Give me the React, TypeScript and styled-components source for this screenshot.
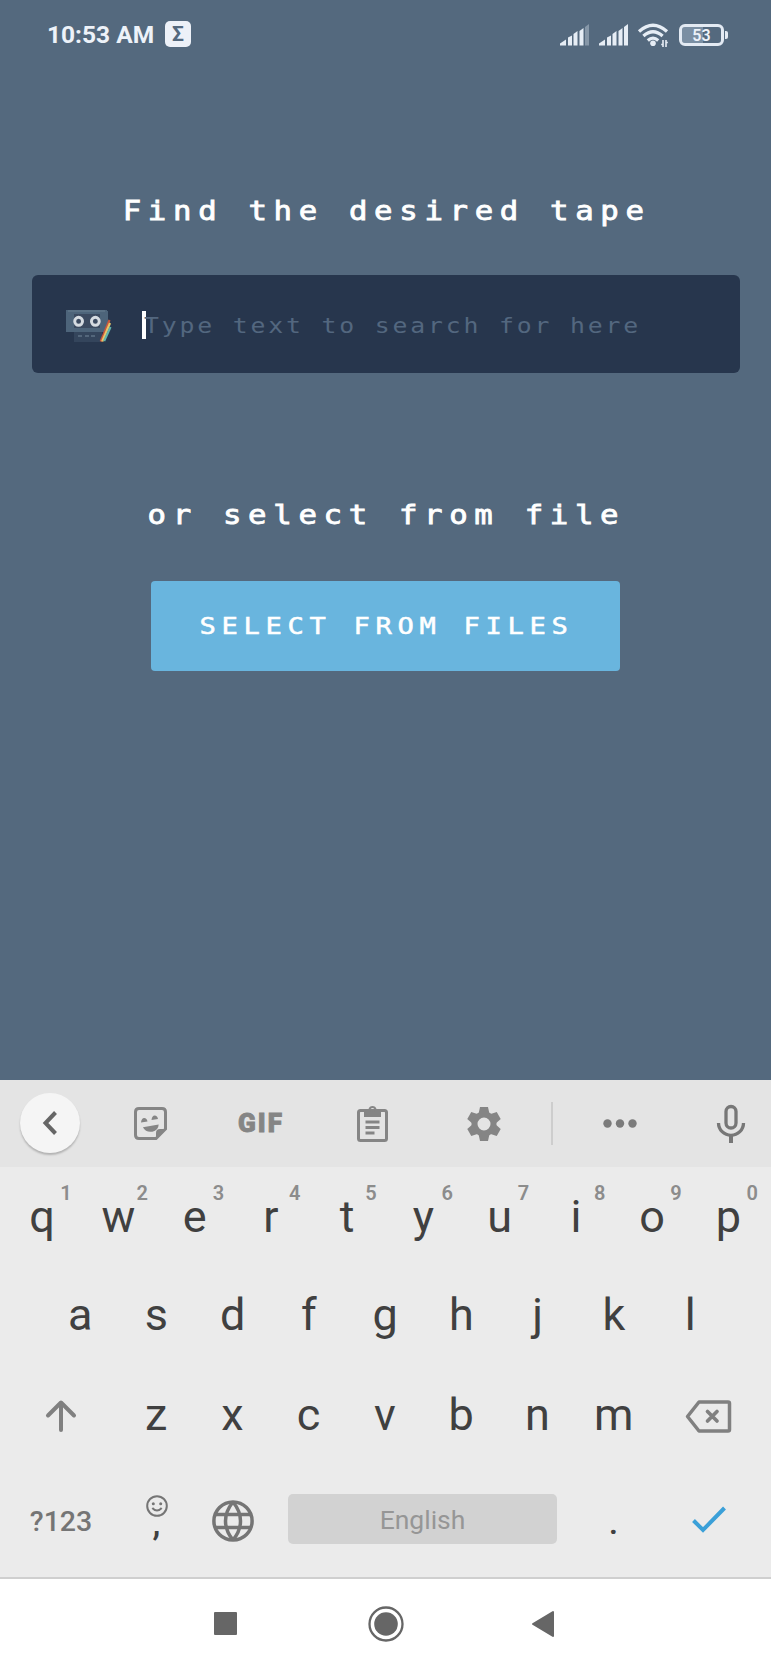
import React from 'react';
import styled, { createGlobalStyle } from 'styled-components';

const GlobalStyle = createGlobalStyle`
  * { box-sizing: border-box; }
  body { margin: 0; background: #54697e; font-family: Roboto, sans-serif; }
  svg { display: block; overflow: visible; }
`;

const Screen = styled.div`
  width: 771px;
  height: 1670px;
  display: flex;
  flex-direction: column;
  background: #54697e;
  overflow: hidden;
`;

const StatusBar = styled.header`
  height: 69px;
  display: flex;
  align-items: center;
  padding: 0 43px 0 47px;
  color: #edf2f9;
`;

const Clock = styled.span`
  font-size: 24.5px;
  font-weight: 700;
  line-height: 28px;
  width: 118px;
  white-space: nowrap;
`;

const SigmaBadge = styled.span`
  width: 26px;
  height: 26px;
  margin-bottom: 1px;
  border-radius: 5px;
  background: #edf1f8;
  color: #54697e;
  font: 700 21px/27px Roboto, sans-serif;
  text-align: center;
`;

const StatusIcons = styled.div`
  margin-left: auto;
  display: flex;
  align-items: center;
  gap: 10px;
`;

const BatteryShell = styled.div`
  display: flex;
  align-items: center;
  gap: 1px;
  margin-left: 1px;
`;

const BatteryBody = styled.div`
  width: 45px;
  height: 22px;
  border: 3px solid #e3eaf3;
  border-radius: 6px;
  background: linear-gradient(90deg, #7b8fa3 53%, #54697e 53%);
  background-clip: padding-box;
  font: 600 16px/17px Roboto, sans-serif;
  text-align: center;
`;

const BatteryNub = styled.div`
  width: 3px;
  height: 8px;
  border-radius: 0 2px 2px 0;
  background: #e3eaf3;
`;

const Main = styled.main`
  height: 1011px;
  display: flex;
  flex-direction: column;
  align-items: center;
`;

const PixelText = styled.span<{ $size: number; $gap: number; $left?: boolean }>`
  display: inline-block;
  font-family: 'DejaVu Sans Mono', monospace;
  font-size: ${p => p.$size}px;
  letter-spacing: ${p => p.$gap}px;
  margin-right: ${p => (p.$left ? 0 : -p.$gap)}px;
  transform: scaleX(1.18);
  transform-origin: ${p => (p.$left ? 'left' : 'center')};
  white-space: pre;
`;

const Heading = styled.h1<{ $top: number }>`
  margin: ${p => p.$top}px 3px 0 0;
  height: 40px;
  line-height: 40px;
  font-weight: 400;
  color: #fff;
  -webkit-text-stroke: 0.8px #fff;
`;

const SearchBox = styled.div`
  width: 708px;
  height: 98px;
  margin-top: 46px;
  padding: 3px 0 0 34px;
  border-radius: 6px;
  background: #27364d;
  display: flex;
  align-items: center;
  color: #53677f;
`;

const Caret = styled.span`
  width: 4px;
  height: 28px;
  margin: 0 -2px 2px 31px;
  background: #fff;
`;

const FileButton = styled.button`
  width: 469px;
  height: 90px;
  margin-top: 48px;
  border: 0;
  border-radius: 4px;
  background: #69b5de;
  color: #fff;
  padding: 0 2px 0 0;
  font-weight: 400;
  -webkit-text-stroke: 0.5px #fff;
`;

const Keyboard = styled.section`
  height: 497px;
  display: flex;
  flex-direction: column;
  background: #ebebeb;
`;

const Toolbar = styled.div`
  height: 87px;
  display: grid;
  grid-template-columns: 99px 102px 119px 104px 119px 17px 120px 91px;
  align-items: center;
  justify-items: center;
  background: #e4e4e4;
  color: #858585;
`;

const BackButton = styled.div`
  width: 60px;
  height: 60px;
  margin-bottom: 1px;
  border-radius: 50%;
  background: #f5f5f5;
  box-shadow: 0 2px 2px rgba(0, 0, 0, 0.22);
  display: grid;
  place-items: center;
`;

const Gif = styled.span`
  font: 900 26px/30px Roboto, sans-serif;
  letter-spacing: 2px;
  margin: 0 -1px 2px 0;
  -webkit-text-stroke: 0.9px currentColor;
`;

const Divider = styled.span`
  width: 2px;
  height: 43px;
  background: #cdcdcd;
`;

const MicSlot = styled.span`
  padding-left: 11px;
`;

const KeyRow = styled.div<{ $height: number; $pad: number }>`
  height: ${p => p.$height}px;
  padding: 0 ${p => p.$pad}px;
  display: flex;
`;

const Key = styled.div<{ $width?: number }>`
  position: relative;
  width: ${p => p.$width ?? 76.25}px;
  flex: none;
  display: flex;
  align-items: center;
  justify-content: center;
  font-size: 45px;
  color: #404040;
`;

const Hint = styled.span`
  position: absolute;
  top: 14px;
  left: 52px;
  width: 20px;
  text-align: center;
  font: 600 20px/24px Roboto, sans-serif;
  color: #8c8c8c;
`;

const BottomRow = styled.div`
  height: 111px;
  padding: 0 4px 4px;
  display: flex;
  align-items: center;
  color: #757575;
`;

const BottomSlot = styled.div<{ $width: number; $drop?: number }>`
  width: ${p => p.$width}px;
  padding-top: ${p => p.$drop ?? 0}px;
  display: flex;
  flex-direction: column;
  align-items: center;
`;

const SymbolsLabel = styled.span`
  font: 500 28.5px/34px Roboto, sans-serif;
`;

const Comma = styled.span`
  height: 28px;
  font: 500 35px/14px Roboto, sans-serif;
  color: #404040;
`;

const Period = styled.span`
  font: 500 34px/30px Roboto, sans-serif;
  color: #404040;
`;

const SpaceBar = styled.div`
  width: 269px;
  height: 50px;
  margin: 0 18px 1px;
  border-radius: 5px;
  background: #d2d2d2;
  color: #969696;
  font: 400 26.5px/51px Roboto, sans-serif;
  text-align: center;
`;

const NavBar = styled.nav`
  height: 93px;
  border-top: 2px solid #cfcfcf;
  background: #fff;
  display: flex;
  align-items: center;
  padding: 0 0 2px 214px;
`;

const NavSlot = styled.span<{ $gap?: number }>`
  margin-left: ${p => p.$gap ?? 0}px;
`;

const Signal = ({ dim = false }: { dim?: boolean }) => (
  <svg width="29" height="22" viewBox="0 0 29 22" fill="#e6edf5">
    <path d="M0 21.500v-2l6-4v6z" />
    <path d="M8 21.500v-8l4-2v10z" />
    <path d="M13.500 21.500V10l4-3v14.500z" />
    <path d="M19.500 21.500V7l4-3v17.500z" />
    <path d="M25 21.500V3l4-3v21.500z" opacity={dim ? 0.35 : 1} />
  </svg>
);

const Wifi = () => (
  <svg width="30" height="24" viewBox="0 0 30 24" fill="none" stroke="#e6edf5" strokeWidth="3.3">
    <path d="M1 8.400Q15-4 29 8.400" />
    <path d="M5.400 13Q15 4.500 24.600 13" />
    <path d="M9.800 17.400Q15 12.800 20.200 17.400" />
    <circle cx="15" cy="20.200" r="2.800" fill="#e6edf5" stroke="none" />
    <path d="M25 17v7M28 17v7M23.200 21.500H25M28 19.500h1.800" strokeWidth="1.600" />
  </svg>
);

const Cassette = () => (
  <svg width="45" height="32" viewBox="0 0 46 32" preserveAspectRatio="none" shapeRendering="crispEdges">
    <path d="M8 21h29v11H8z" fill="#34455c" />
    <path d="M1 0h40l2 2v18l-2 2H0V1z" fill="#4d647a" />
    <path d="M2 0h38v2H2z" fill="#5a7185" />
    <path d="M8 4h27v14H8z" fill="#3b4a60" />
    <g fill="none" stroke="#d5dbe1" strokeWidth="3" shapeRendering="auto">
      <circle cx="12.900" cy="11.300" r="4" />
      <circle cx="30" cy="11.300" r="4" />
    </g>
    <path d="M12 25h4v2h-4zM19 25h4v2h-4zM26 25h4v2h-4z" fill="#53667b" />
    <g fill="none" strokeWidth="2.200" shapeRendering="auto">
      <path d="M44.500 10 35.500 31.500" stroke="#c9573d" />
      <path d="M45 13 37 31.500" stroke="#e9c568" />
      <path d="M45.500 17 39 31" stroke="#63b5ad" />
    </g>
  </svg>
);

const Sticker = () => (
  <svg width="33" height="33" viewBox="0 0 33 33" fill="none" stroke="currentColor" strokeWidth="3">
    <path d="M5 1.500h23q3.500 0 3.500 3.500v17l-9.500 9.500H5Q1.500 31.500 1.500 28V5Q1.500 1.500 5 1.500z" />
    <path d="M22 32v-6q0-4 4-4h6z" fill="currentColor" stroke="none" />
    <path d="M9 19h16q-1.500 6-7.500 6-6.500 0-8.500-6z" fill="currentColor" stroke="none" transform="rotate(-10 16 20)" />
    <path d="M7 15.500q.5-4.500 3.200-4.500t3.300 3.500zM17.500 13q.5-4.500 3.200-4.500t3.300 3.500z" fill="currentColor" stroke="none" />
  </svg>
);

const Clipboard = () => (
  <svg width="31" height="37" viewBox="0 0 31 37">
    <rect x="1.500" y="5.500" width="28" height="30" rx="2" fill="none" stroke="currentColor" strokeWidth="3" />
    <path fill="currentColor" fillRule="evenodd" d="M7 4h4.500a4.200 4.200 0 0 1 8 0H24v8H7zM15.500 3a2 2 0 1 0 0 4 2 2 0 0 0 0-4z" />
    <path d="M8.500 17h14M8.500 22.500h14M8.500 28h9" stroke="currentColor" strokeWidth="3" />
  </svg>
);

const gearTooth = 'M-5.500-10-4-17H4l1.500 7z';

const Gear = () => (
  <svg width="34" height="34" viewBox="-17 -17 34 34" fill="currentColor">
    <circle r="9.500" fill="none" stroke="currentColor" strokeWidth="6" />
    {[0, 60, 120, 180, 240, 300].map(angle => (
      <path key={angle} d={gearTooth} transform={`rotate(${angle})`} />
    ))}
  </svg>
);

const Dots = () => (
  <svg width="34" height="9" viewBox="0 0 34 9" fill="#7b7b7b">
    <circle cx="4.500" cy="4.500" r="4.200" />
    <circle cx="17" cy="4.500" r="4.200" />
    <circle cx="29.500" cy="4.500" r="4.200" />
  </svg>
);

const Mic = () => (
  <svg width="28" height="38" viewBox="0 0 28 38" fill="none" stroke="#777" strokeWidth="3.300">
    <rect x="9" y="1.500" width="10" height="21.500" rx="5" />
    <path d="M1.500 18a12.500 12.300 0 0 0 25 0" />
    <path d="M14 30v8" strokeWidth="4" />
  </svg>
);

const Shift = () => (
  <svg width="30" height="32" viewBox="0 0 30 32" fill="none" stroke="#808080" strokeWidth="4" strokeLinecap="round" strokeLinejoin="round">
    <path d="M15 31V4M2 16.500 15 3.500l13 13" />
  </svg>
);

const Backspace = () => (
  <svg width="46" height="32" viewBox="0 0 46 32" fill="none" stroke="#808080" strokeLinejoin="round" strokeLinecap="round">
    <path d="M13 3h29q1.500 0 1.500 1.500v26q0 1.500-1.500 1.500H13L1.500 17.500z" strokeWidth="3.500" />
    <path d="m21.500 12.500 9.500 9.500M31 12.500 21.500 22" strokeWidth="3.700" />
  </svg>
);

const Smiley = () => (
  <svg width="22" height="22" viewBox="0 0 22 22" fill="none" stroke="#757575" strokeWidth="2">
    <circle cx="11" cy="11" r="9.800" />
    <circle cx="7.300" cy="8.700" r="1.500" fill="#757575" stroke="none" />
    <circle cx="14.700" cy="8.700" r="1.500" fill="#757575" stroke="none" />
    <path d="M6.300 13q4.700 5 9.400 0" />
  </svg>
);

const Globe = () => (
  <svg width="42" height="42" viewBox="0 0 42 42" fill="none" stroke="#757575" strokeWidth="3.500">
    <circle cx="21" cy="21" r="19.100" />
    <path d="M4 14.500h34M4 27.500h34M21 2C11 14 11 28 21 40M21 2c10 12 10 26 0 38" />
  </svg>
);

const digits = '1234567890';

export default function App() {
  return (
    <Screen>
      <GlobalStyle />
      <StatusBar>
        <Clock>10:53 AM</Clock>
        <SigmaBadge>Σ</SigmaBadge>
        <StatusIcons>
          <Signal dim />
          <Signal />
          <Wifi />
          <BatteryShell>
            <BatteryBody>53</BatteryBody>
            <BatteryNub />
          </BatteryShell>
        </StatusIcons>
      </StatusBar>

      <Main>
        <Heading $top={120}>
          <PixelText $size={26} $gap={5.65}>Find the desired tape</PixelText>
        </Heading>
        <SearchBox>
          <Cassette />
          <Caret />
          <PixelText $size={21} $gap={2.4} $left>Type text to search for here</PixelText>
        </SearchBox>
        <Heading $top={120}>
          <PixelText $size={26} $gap={5.65}>or select from file</PixelText>
        </Heading>
        <FileButton>
          <PixelText $size={23} $gap={4.8}>SELECT FROM FILES</PixelText>
        </FileButton>
      </Main>

      <Keyboard>
        <Toolbar>
          <BackButton>
            <svg width="14" height="24" viewBox="0 0 14 24" fill="none" stroke="#666" strokeWidth="4">
              <path d="M12.500 1.500 2.500 12l10 10.500" />
            </svg>
          </BackButton>
          <Sticker />
          <Gif>GIF</Gif>
          <Clipboard />
          <Gear />
          <Divider />
          <Dots />
          <MicSlot><Mic /></MicSlot>
        </Toolbar>
        <KeyRow $height={99} $pad={4}>
          {[...'qwertyuiop'].map((c, i) => (
            <Key key={c}>{c}<Hint>{digits[i]}</Hint></Key>
          ))}
        </KeyRow>
        <KeyRow $height={97} $pad={42}>
          {[...'asdfghjkl'].map(c => <Key key={c}>{c}</Key>)}
        </KeyRow>
        <KeyRow $height={103} $pad={4}>
          <Key $width={114}><Shift /></Key>
          {[...'zxcvbnm'].map(c => <Key key={c}>{c}</Key>)}
          <Key $width={114}><Backspace /></Key>
        </KeyRow>
        <BottomRow>
          <BottomSlot $width={114} $drop={4}><SymbolsLabel>?123</SymbolsLabel></BottomSlot>
          <BottomSlot $width={77}><Smiley /><Comma>,</Comma></BottomSlot>
          <BottomSlot $width={75} $drop={2}><Globe /></BottomSlot>
          <SpaceBar>English</SpaceBar>
          <BottomSlot $width={77} $drop={4}><Period>.</Period></BottomSlot>
          <BottomSlot $width={114}>
            <svg width="34" height="27" viewBox="0 0 34 27" fill="none" stroke="#3ba0d8" strokeWidth="4">
              <path d="m1.500 14.500 9.500 9.500L32.500 2" />
            </svg>
          </BottomSlot>
        </BottomRow>
      </Keyboard>

      <NavBar>
        <NavSlot>
          <svg width="23" height="23" viewBox="0 0 23 23"><rect width="23" height="23" rx="1" fill="#666" /></svg>
        </NavSlot>
        <NavSlot $gap={131}>
          <svg width="36" height="36" viewBox="0 0 36 36">
            <circle cx="18" cy="18" r="16.500" fill="none" stroke="#666" strokeWidth="2.300" />
            <circle cx="18" cy="18" r="11.800" fill="#666" />
          </svg>
        </NavSlot>
        <NavSlot $gap={128}>
          <svg width="22" height="26" viewBox="0 0 22 26">
            <path d="M1 13 21 1v24z" fill="#666" stroke="#666" strokeWidth="2" strokeLinejoin="round" />
          </svg>
        </NavSlot>
      </NavBar>
    </Screen>
  );
}
